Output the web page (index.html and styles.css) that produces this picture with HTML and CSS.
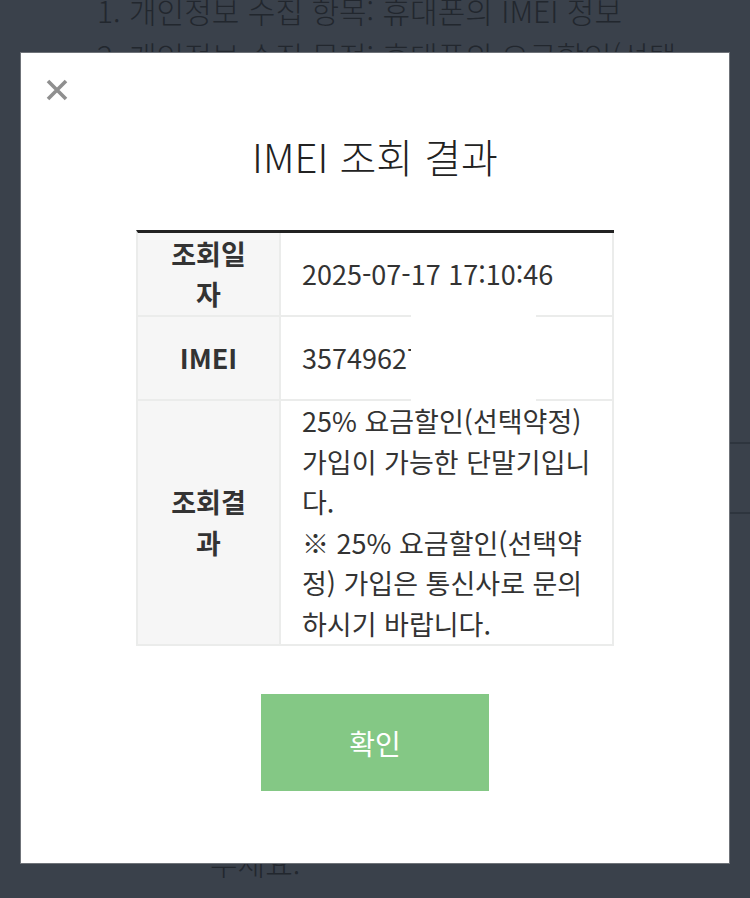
FILE: index.html
```html
<!DOCTYPE html>
<html lang="ko">
<head>
<meta charset="utf-8">
<title>IMEI 조회 결과</title>
<link rel="stylesheet" href="styles.css">
</head>
<body>
<div class="page">
  <ol class="terms">
    <li>1. 개인정보 수집 항목: 휴대폰의 IMEI 정보</li>
    <li>2. 개인정보 수집 목적: 휴대폰의 요금할인(선택</li>
  </ol>
  <div class="bg-box"></div>
  <p class="bg-tail">주세요.</p>
</div>

<div class="modal">
  <button class="close" aria-label="닫기">
    <svg viewBox="0 0 24 24" width="24" height="24"><path d="M3 3 L21 21 M21 3 L3 21" stroke="#8f8f8f" stroke-width="3.6" stroke-linecap="butt" fill="none"/></svg>
  </button>
  <h1 class="title">IMEI 조회 결과</h1>
  <table class="result">
    <tr class="row">
      <th>조회일자</th>
      <td>2025-07-17 17:10:46</td>
    </tr>
    <tr class="row">
      <th>IMEI</th>
      <td class="imei">357496271048823<span class="mask"></span></td>
    </tr>
    <tr class="last">
      <th>조회결과</th>
      <td class="msg">25% 요금할인(선택약정) 가입이 가능한 단말기입니다.<br>※ 25% 요금할인(선택약정) 가입은 통신사로 문의하시기 바랍니다.</td>
    </tr>
  </table>
  <button class="ok">확인</button>
</div>
</body>
</html>
```

FILE: styles.css
```css
html, body {
  margin: 0;
  padding: 0;
}
body {
  width: 750px;
  height: 898px;
  overflow: hidden;
  background: #3a414b;
  font-family: "Noto Sans CJK KR", "Noto Sans", sans-serif;
  position: relative;
}
.page {
  color: #22272e;
}
.terms {
  list-style: none;
  margin: -12px 0 0;
  padding: 0 0 0 97px;
  font-size: 30px;
  font-weight: 300;
  line-height: 45px;
  white-space: nowrap;
}
.bg-box {
  margin: 364px 0 0 400px;
  height: 68px;
  border-top: 2px solid #2e353e;
  border-bottom: 2px solid #2e353e;
}
.bg-tail {
  margin: 326px 0 0;
  padding-left: 210px;
  font-size: 30px;
  font-weight: 300;
  line-height: 45px;
}

.modal {
  position: absolute;
  left: 20px;
  top: 52px;
  width: 710px;
  height: 812px;
  box-sizing: border-box;
  background: #fff;
  border: 1px solid #6f7379;
  display: flex;
  flex-direction: column;
  align-items: center;
}
.close {
  align-self: flex-start;
  margin: 25px 0 0 24px;
  padding: 0;
  border: 0;
  background: none;
  width: 24px;
  height: 24px;
  display: block;
}
.close svg { display: block; }
.title {
  margin: 30px 0 0;
  font-size: 40px;
  font-weight: 300;
  line-height: 48px;
  color: #222;
}
.result {
  margin-top: 50px;
  width: 478px;
  border-collapse: separate;
  border-spacing: 0;
  border-top: 3px solid #222;
  border-left: 2px solid #ebeceb;
  font-size: 27px;
  line-height: 40.5px;
  color: #333;
}
.result th, .result td {
  border-bottom: 2px solid #ebeceb;
  border-right: 2px solid #ebeceb;
  padding: 0;
  vertical-align: middle;
}
.result th {
  width: 91px;
  padding: 0 25px;
  background: #f6f6f6;
  font-weight: 700;
  text-align: center;
  color: #333;
}
.result td {
  padding: 0 16px 0 21px;
  text-align: left;
  font-weight: 400;
}
.row th, .row td {
  height: 82px;
}
.imei {
  position: relative;
}
.mask {
  position: absolute;
  left: 130px;
  top: -4px;
  width: 125px;
  height: 88px;
  background: #fff;
}
.ok {
  margin-top: 48px;
  width: 228px;
  height: 97px;
  border: 0;
  background: #84c885;
  color: #fff;
  font-family: "Noto Sans CJK KR", "Noto Sans", sans-serif;
  font-size: 28px;
  font-weight: 400;
  padding: 0;
}
```
